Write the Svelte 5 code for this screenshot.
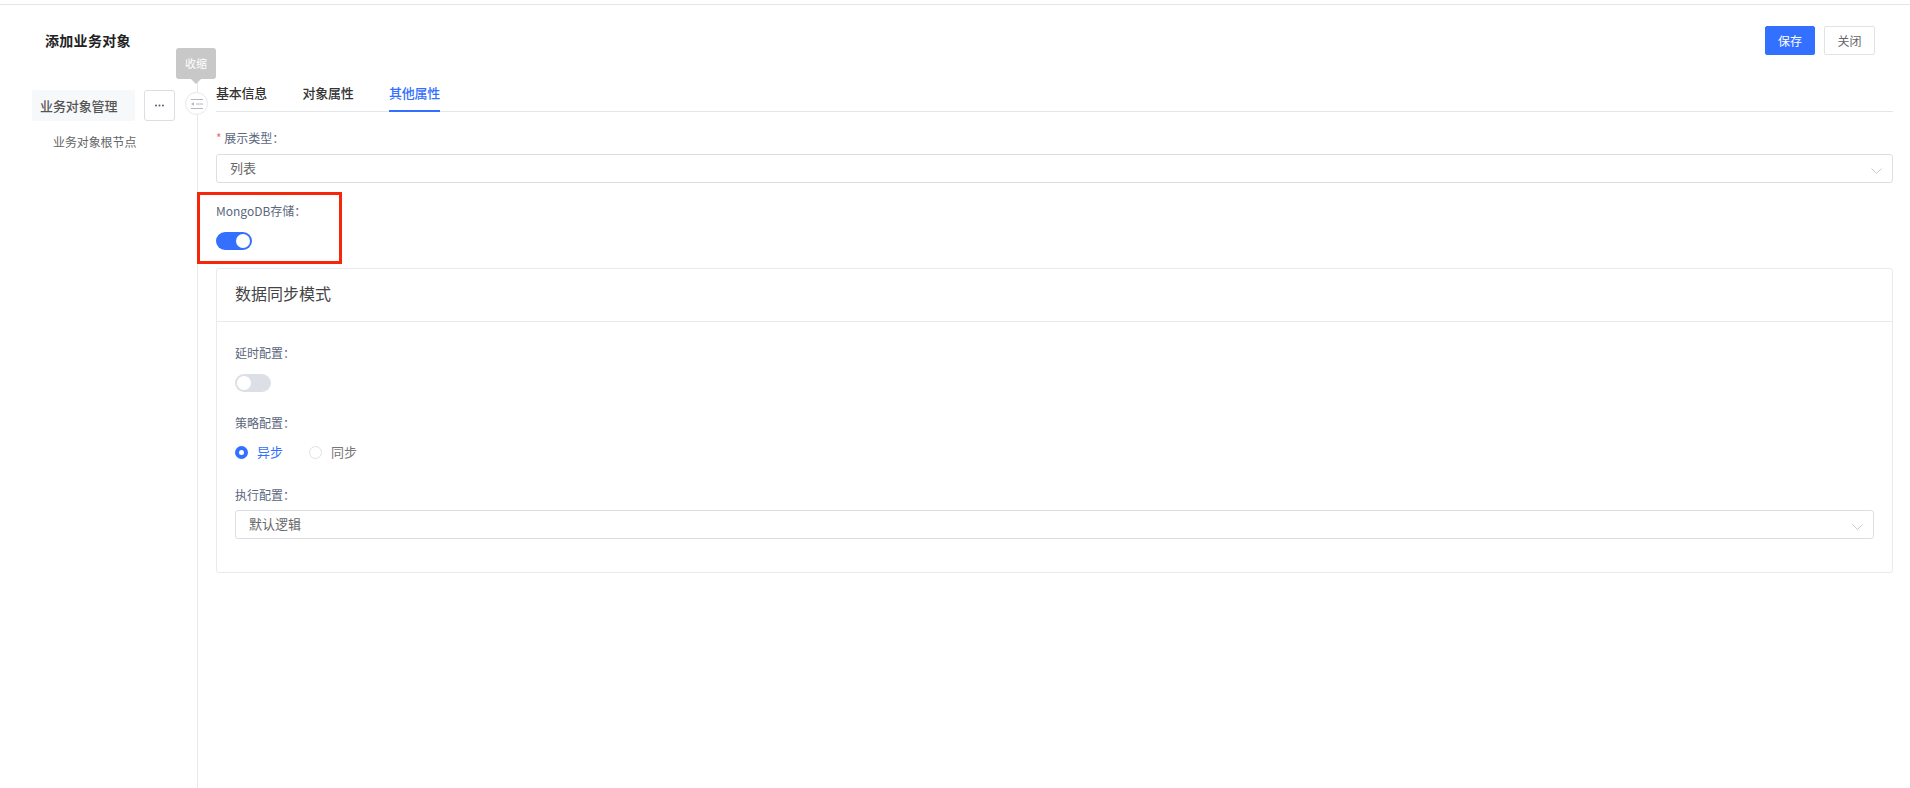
<script lang="ts">
  // Add business object page, "other properties" tab.
  const tabs = ['基本信息', '对象属性', '其他属性'];
  let activeTab = $state('其他属性');
  let mongo = $state(true);
  let delay = $state(false);
  let strategy = $state('async');
</script>

<div class="page">
  <header>
    <h1>添加业务对象</h1>
    <div class="actions">
      <button type="button" class="btn primary">保存</button>
      <button type="button" class="btn">关闭</button>
    </div>
  </header>

  <div class="body">
    <aside>
      <div class="side-top">
        <div class="side-title">业务对象管理</div>
        <button type="button" class="more" aria-label="more">
          <svg viewBox="0 0 11 3" width="11" height="3"><circle cx="2" cy="1.5" r="1" /><circle cx="5.5" cy="1.5" r="1" /><circle cx="9" cy="1.5" r="1" /></svg>
        </button>
      </div>
      <div class="tree-node">业务对象根节点</div>

      <div class="tip">收缩</div>
      <button type="button" class="collapse" aria-label="收缩">
        <svg viewBox="0 0 14 10" width="14" height="10" fill="none" stroke="#b4b6ba" stroke-width="1">
          <path d="M1 .5h12M6 5h7M1 9.5h12" />
          <path d="M1 5 4 3.2v3.6z" fill="#b4b6ba" stroke="none" />
        </svg>
      </button>
    </aside>

    <main>
      <nav class="tabs">
        {#each tabs as tab}
          <button type="button" class="tab" class:active={activeTab === tab} onclick={() => (activeTab = tab)}>{tab}</button>
        {/each}
      </nav>

      <div class="field first">
        <div class="label"><span class="req">*</span> 展示类型：</div>
        <div class="select">
          <span>列表</span>
          <svg class="chev" viewBox="0 0 11 6" width="11" height="6" fill="none" stroke="#c9cbd2" stroke-width="1"><path d="M.5 .5l5 5 5-5" /></svg>
        </div>
      </div>

      <div class="mongo">
        <div class="label">MongoDB存储：</div>
        <button type="button" class="switch" class:on={mongo} aria-label="MongoDB存储" onclick={() => (mongo = !mongo)}></button>
        <div class="mark"></div>
      </div>

      <section class="card">
        <div class="card-head">数据同步模式</div>
        <div class="card-body">
          <div class="label">延时配置：</div>
          <button type="button" class="switch" class:on={delay} aria-label="延时配置" onclick={() => (delay = !delay)}></button>

          <div class="label l2">策略配置：</div>
          <div class="radios">
            <button type="button" class="radio" class:on={strategy === 'async'} onclick={() => (strategy = 'async')}><i></i>异步</button>
            <button type="button" class="radio" class:on={strategy === 'sync'} onclick={() => (strategy = 'sync')}><i></i>同步</button>
          </div>

          <div class="label l3">执行配置：</div>
          <div class="select">
            <span>默认逻辑</span>
            <svg class="chev" viewBox="0 0 11 6" width="11" height="6" fill="none" stroke="#c9cbd2" stroke-width="1"><path d="M.5 .5l5 5 5-5" /></svg>
          </div>
        </div>
      </section>
    </main>
  </div>
</div>

<style>
  :global(body) {
    margin: 0;
    background: #fff;
    font-family: "Noto Sans CJK SC", "Noto Sans", sans-serif;
    color: #333;
  }
  button {
    font: inherit;
    cursor: pointer;
  }
  .page {
    height: 788px;
    padding-top: 4px;
    box-sizing: border-box;
    display: flex;
    flex-direction: column;
    overflow: hidden;
  }
  header {
    flex: none;
    height: 76px;
    box-sizing: border-box;
    border-top: 1px solid #e6e6e6;
    padding: 21px 35px 0 45px;
    display: flex;
    justify-content: space-between;
    align-items: flex-start;
  }
  h1 {
    margin: 0;
    font-size: 14px;
    line-height: 29px;
    font-weight: 700;
    letter-spacing: 0.3px;
    color: #222;
  }
  .actions {
    display: flex;
    gap: 9px;
  }
  .btn {
    width: 51px;
    height: 29px;
    padding: 0;
    background: #fff;
    border: 1px solid #e1e3e9;
    border-radius: 2px;
    font-size: 12px;
    color: #666;
  }
  .btn.primary {
    width: 50px;
    background: #3370ff;
    border-color: #3370ff;
    color: #fff;
  }
  .body {
    flex: 1;
    display: flex;
    min-height: 0;
  }
  aside {
    position: relative;
    flex: none;
    width: 198px;
    box-sizing: border-box;
    border-right: 1px solid #e6e8ee;
    padding: 10px 0 0 32px;
  }
  .side-top {
    display: flex;
    gap: 9px;
  }
  .side-title {
    width: 103px;
    height: 31px;
    box-sizing: border-box;
    padding-left: 8px;
    line-height: 31px;
    background: #f7f8fa;
    border-radius: 2px;
    font-size: 13px;
    letter-spacing: -0.1px;
    color: #555;
    font-weight: 500;
  }
  .more {
    width: 31px;
    height: 31px;
    padding: 0;
    background: #fff;
    border: 1px solid #dcdee5;
    border-radius: 3px;
    display: flex;
    align-items: center;
    justify-content: center;
  }
  .more svg {
    fill: #555f75;
  }
  .tree-node {
    margin: 11px 0 0 21px;
    font-size: 12px;
    line-height: 20px;
    letter-spacing: -0.1px;
    color: #666;
  }
  .tip {
    position: absolute;
    left: 176px;
    top: -32px;
    width: 40px;
    height: 31px;
    background: #c8c8c8;
    border-radius: 3px;
    color: #fff;
    font-size: 11px;
    line-height: 31px;
    text-align: center;
    z-index: 2;
  }
  .tip::after {
    content: "";
    position: absolute;
    left: 15px;
    top: 31px;
    border: 5px solid transparent;
    border-top: 5px solid #c8c8c8;
  }
  .collapse {
    position: absolute;
    left: 185px;
    top: 12px;
    width: 23px;
    height: 23px;
    padding: 0;
    background: #fff;
    border: 1px solid #e6e8ee;
    border-radius: 50%;
    display: flex;
    align-items: center;
    justify-content: center;
  }
  main {
    flex: 1;
    min-width: 0;
    padding: 0 17px 0 18px;
  }
  .tabs {
    display: flex;
    gap: 35.5px;
    height: 32px;
    box-sizing: border-box;
    border-bottom: 1px solid #e4e6ed;
  }
  .tab {
    width: 51px;
    height: 32px;
    padding: 0 0 6px;
    box-sizing: border-box;
    background: none;
    border: 0;
    border-bottom: 2px solid transparent;
    font-size: 13px;
    font-weight: 500;
    letter-spacing: -0.25px;
    white-space: nowrap;
    color: #333;
  }
  .tab.active {
    color: #3370ff;
    border-bottom-color: #3370ff;
  }
  .label {
    font-size: 12px;
    line-height: 18px;
    color: #5b667d;
  }
  .req {
    color: #f56c6c;
  }
  .field.first {
    margin-top: 17px;
  }
  .field .label {
    margin-bottom: 7px;
  }
  .select {
    height: 29px;
    box-sizing: border-box;
    border: 1px solid #dcdee6;
    border-radius: 3px;
    padding: 0 10px 0 13px;
    display: flex;
    align-items: center;
    justify-content: space-between;
    font-size: 13px;
    color: #666;
  }
  .select span {
    margin-top: -2px;
  }
  .chev {
    margin-top: 4px;
  }
  .mongo {
    position: relative;
    margin-top: 19px;
    height: 58px;
  }
  .mongo .switch {
    margin-top: 12px;
  }
  .mark {
    position: absolute;
    left: -19px;
    top: -10px;
    width: 145px;
    height: 72px;
    box-sizing: border-box;
    border: 3px solid #f5260a;
    pointer-events: none;
  }
  .switch {
    display: block;
    position: relative;
    width: 36px;
    height: 18px;
    padding: 0;
    border: 0;
    border-radius: 9px;
    background: #dcdfe6;
  }
  .switch::after {
    content: "";
    position: absolute;
    left: 2px;
    top: 2px;
    width: 14px;
    height: 14px;
    border-radius: 50%;
    background: #fff;
  }
  .switch.on {
    background: #3370ff;
  }
  .switch.on::after {
    left: 20px;
  }
  .card {
    margin-top: 8px;
    height: 305px;
    box-sizing: border-box;
    border: 1px solid #e8eaf2;
    border-radius: 3px;
  }
  .card-head {
    height: 53px;
    box-sizing: border-box;
    border-bottom: 1px solid #e8eaf2;
    padding-left: 18px;
    line-height: 49px;
    font-size: 16px;
    color: #444;
  }
  .card-body {
    padding: 22px 18px 0;
  }
  .card-body .switch {
    margin-top: 12px;
  }
  .l2 {
    margin-top: 22px;
  }
  .radios {
    display: flex;
    gap: 26px;
    margin-top: 10px;
    height: 20px;
  }
  .radio {
    display: flex;
    align-items: center;
    gap: 9px;
    padding: 0;
    background: none;
    border: 0;
    font-size: 13px;
    line-height: 20px;
    color: #777;
  }
  .radio i {
    width: 11px;
    height: 11px;
    border: 1px solid #dfe1e8;
    border-radius: 50%;
    display: block;
  }
  .radio.on {
    color: #3370ff;
  }
  .radio.on i {
    width: 5px;
    height: 5px;
    border: 4px solid #3370ff;
  }
  .l3 {
    margin-top: 24px;
    margin-bottom: 6px;
  }
</style>
